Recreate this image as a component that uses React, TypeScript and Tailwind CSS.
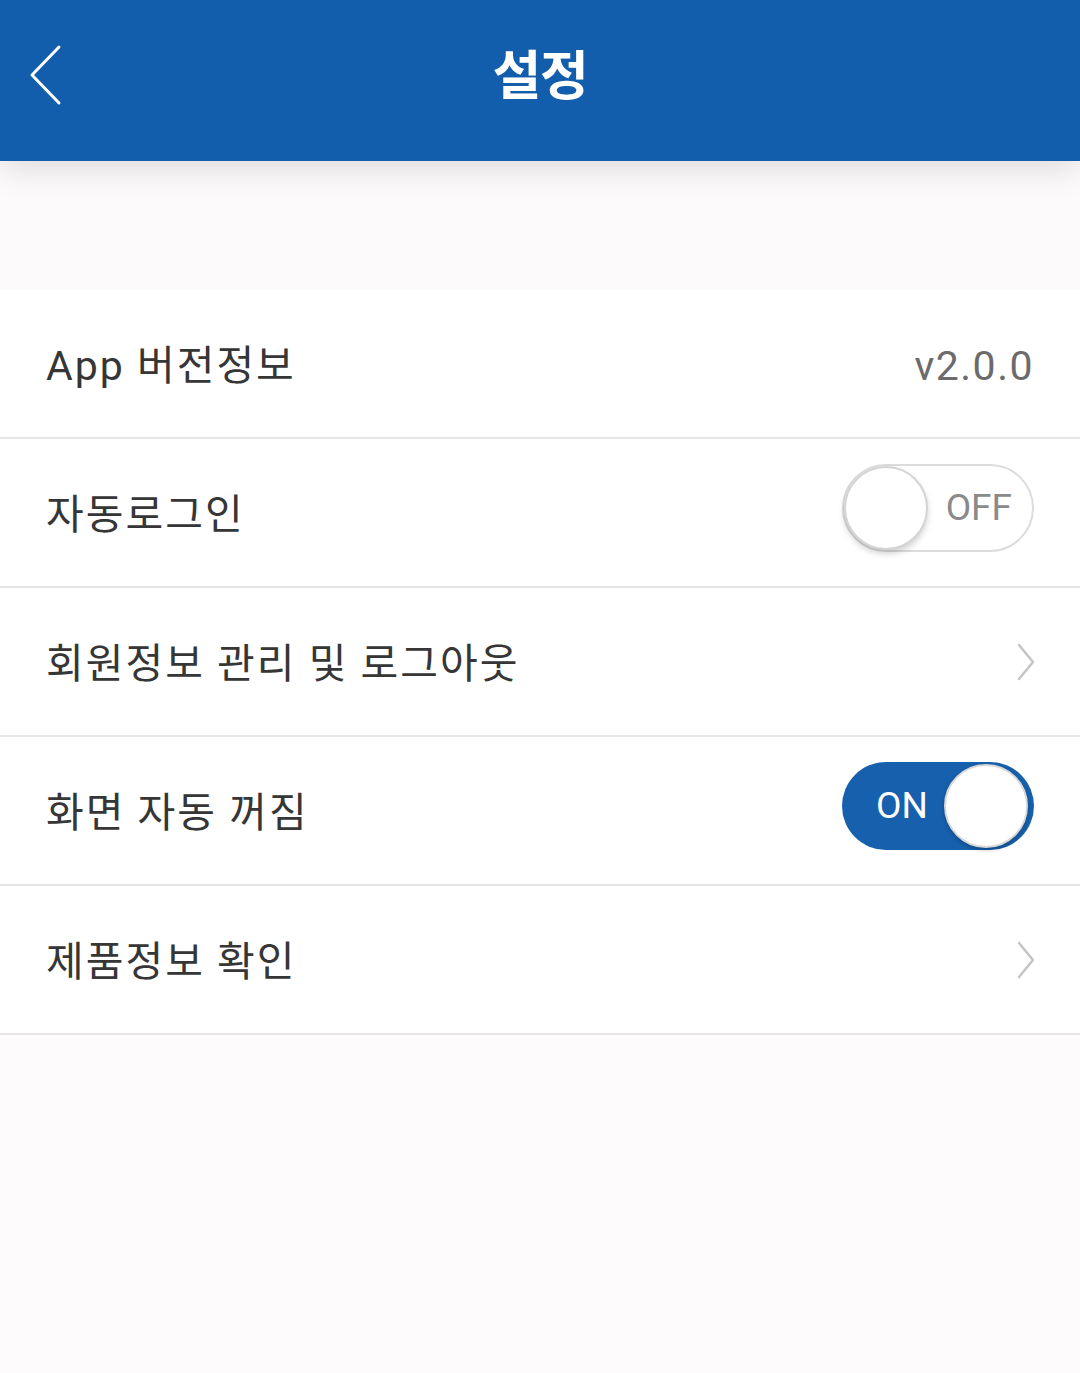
import React from "react"

const rows = [
  { label: "App 버전정보", kind: "version" },
  { label: "자동로그인", kind: "off" },
  { label: "회원정보 관리 및 로그아웃", kind: "link" },
  { label: "화면 자동 꺼짐", kind: "on" },
  { label: "제품정보 확인", kind: "link" },
]

function Chevron() {
  return (
    <svg width="20" height="40" viewBox="0 0 20 40" fill="none" className="mr-[-2px]">
      <path d="M3 3 L17 20 L3 37" stroke="#c4c4c4" strokeWidth="2.5" strokeLinecap="round" strokeLinejoin="round" />
    </svg>
  )
}

function Toggle({ on }: { on: boolean }) {
  if (on) {
    return (
      <div className="relative mb-[9px] w-[192px] h-[88px] rounded-full bg-[#1660ad] flex items-center">
        <span className="pl-[34px] text-[37px] text-white">ON</span>
        <div className="absolute right-[6px] top-[2px] w-[84px] h-[84px] rounded-full bg-white border-2 border-[#d8d8d8] shadow-[0_2px_4px_rgba(0,0,0,0.25)]" />
      </div>
    )
  }
  return (
    <div className="relative mb-[9px] w-[192px] h-[88px] rounded-full bg-white border-2 border-[#dcdcdc] flex items-center justify-end">
      <span className="pr-[20px] text-[37px] text-[#8a8a8a]">OFF</span>
      <div className="absolute left-0 top-0 w-[84px] h-[84px] rounded-full bg-white border-2 border-[#d4d4d4] shadow-[0_4px_6px_rgba(0,0,0,0.18)]" />
    </div>
  )
}

export default function App() {
  return (
    <div
      className="w-[1080px] h-[1373px] bg-[#fefbfd] flex flex-col"
      style={{ fontFamily: 'Roboto, "Noto Sans CJK KR", sans-serif' }}
    >
      {/* Header */}
      <header className="relative h-[161px] bg-[#125dac] flex items-center justify-center shadow-[0_8px_30px_rgba(0,0,0,0.12)] z-10">
        <svg className="absolute left-[28px] top-[44px]" width="36" height="62" viewBox="0 0 36 62" fill="none">
          <path d="M31 3 L4 31 L31 59" stroke="white" strokeWidth="3" strokeLinecap="round" strokeLinejoin="round" />
        </svg>
        <h1 className="text-[53px] font-bold text-white tracking-tight -mt-[6px]">설정</h1>
      </header>

      {/* Spacer band */}
      <div className="h-[129px] bg-[#fdfafb]" />

      {/* Rows */}
      <div className="flex flex-col bg-white">
        {rows.map((row) => (
          <div
            key={row.label}
            className="h-[149px] flex items-center justify-between pl-[46px] pr-[46px] border-b-2 border-[#e8e5e7]"
          >
            <span className="pt-[6px] text-[41px] tracking-[2px] text-[#363636]">{row.label}</span>
            {row.kind === "version" && (
              <span className="pt-[6px] text-[41px] tracking-[1.5px] text-[#6b6b6b]">v2.0.0</span>
            )}
            {row.kind === "off" && <Toggle on={false} />}
            {row.kind === "on" && <Toggle on />}
            {row.kind === "link" && <Chevron />}
          </div>
        ))}
      </div>
    </div>
  )
}
